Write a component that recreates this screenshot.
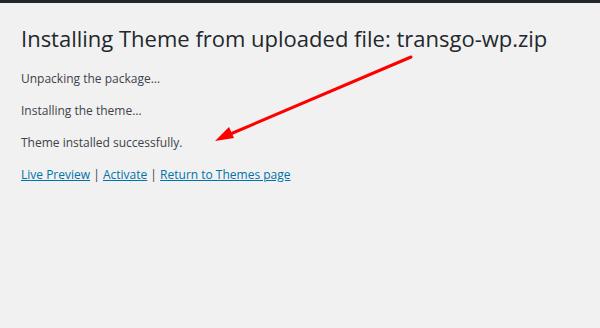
export default function App() {
  return (
    <div className="relative w-[600px] h-[328px] bg-[#f1f1f1] overflow-hidden" style={{ fontFamily: '"Open Sans", "Noto Sans", sans-serif' }}>
      <div className="h-[3px] bg-[#23282d]" />
      <div className="px-[21px] pt-[18px] text-[#3c434a]">
        <h1 className="text-[22px] leading-[34px] text-[#23282d]">
          Installing Theme from uploaded file: transgo-wp.zip
        </h1>
        <p className="mt-[14px] text-[12px] leading-[20px]">Unpacking the package…</p>
        <p className="mt-[12px] text-[12px] leading-[20px]">Installing the theme…</p>
        <p className="mt-[12px] text-[12px] leading-[20px]">Theme installed successfully.</p>
        <p className="mt-[12px] text-[12px] leading-[20px]">
          <a href="#" className="text-[#0073aa] underline">Live Preview</a> |{" "}
          <a href="#" className="text-[#0073aa] underline">Activate</a> |{" "}
          <a href="#" className="text-[#0073aa] underline">Return to Themes page</a>
        </p>
      </div>
      {/* annotation arrow */}
      <svg className="absolute left-0 top-0" width="600" height="328">
        <line x1="411" y1="57" x2="228" y2="135" stroke="#ff0000" strokeWidth="3" strokeLinecap="round" />
        <polygon points="215,141 229,127 234,138" fill="#ff0000" />
      </svg>
    </div>
  );
}
